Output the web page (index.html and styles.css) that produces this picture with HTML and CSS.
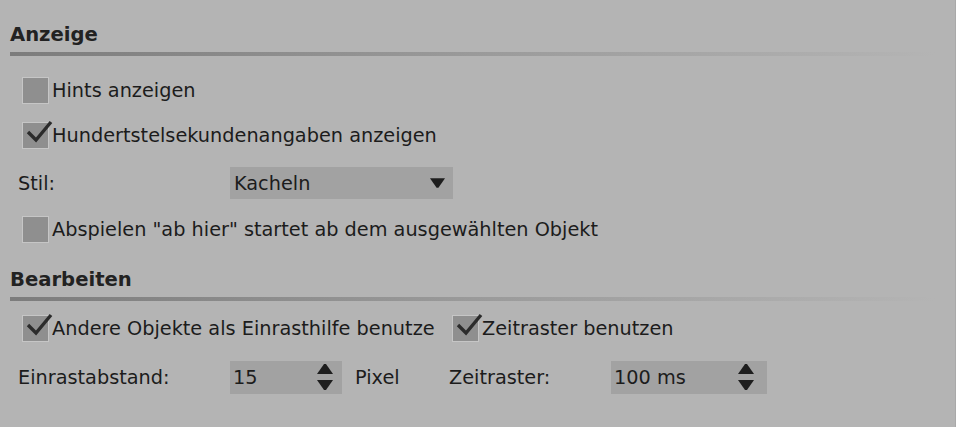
FILE: index.html
```html
<!DOCTYPE html>
<html lang="de">
<head>
<meta charset="utf-8">
<link rel="stylesheet" href="styles.css">
</head>
<body>
<div class="panel">
  <div class="title t1">Anzeige</div>
  <div class="sep"></div>

  <div class="row r-hints">
    <span class="cb"></span><span class="lbl">Hints anzeigen</span>
  </div>
  <div class="row r-hund">
    <span class="cb checked"><svg viewBox="0 0 28 28" class="tick"><polyline points="4,11 12,19 27,1"/></svg></span><span class="lbl">Hundertstelsekundenangaben anzeigen</span>
  </div>
  <div class="row r-stil">
    <span class="field-label">Stil:</span>
    <div class="select">
      <span class="val">Kacheln</span>
      <svg class="arrow" viewBox="0 0 16 10"><polygon points="0,0 16,0 9,10 7,10"/></svg>
    </div>
  </div>
  <div class="row r-abs">
    <span class="cb"></span><span class="lbl">Abspielen "ab hier" startet ab dem ausgewählten Objekt</span>
  </div>

  <div class="title t2">Bearbeiten</div>
  <div class="sep"></div>

  <div class="row r-andere">
    <span class="cb checked"><svg viewBox="0 0 28 28" class="tick"><polyline points="4,11 12,19 27,1"/></svg></span><span class="lbl clip">Andere Objekte als Einrasthilfe benutzen</span>
    <span class="cb checked cb2"><svg viewBox="0 0 28 28" class="tick"><polyline points="4,11 12,19 27,1"/></svg></span><span class="lbl">Zeitraster benutzen</span>
  </div>
  <div class="row r-einrast">
    <span class="field-label">Einrastabstand:</span>
    <div class="spin s1">
      <span class="val">15</span>
      <svg class="updown" viewBox="0 0 16 26"><polygon points="7,0 9,0 16,10 0,10"/><polygon points="0,16 16,16 9,26 7,26"/></svg>
    </div>
    <span class="unit">Pixel</span>
    <span class="field-label l2">Zeitraster:</span>
    <div class="spin s2">
      <span class="val">100 ms</span>
      <svg class="updown" viewBox="0 0 16 26"><polygon points="7,0 9,0 16,10 0,10"/><polygon points="0,16 16,16 9,26 7,26"/></svg>
    </div>
  </div>
</div>
</body>
</html>
```

FILE: styles.css
```css
html, body {
  margin: 0;
  padding: 0;
}
body {
  width: 956px;
  height: 427px;
  background: #b4b4b4;
  font-family: "DejaVu Sans", sans-serif;
  font-size: 19.3px;
  color: #1c1c1c;
  overflow: hidden;
  box-sizing: border-box;
  border-right: 1px solid #a9a9a9;
}
.panel {
  padding-left: 10px;
}
.title {
  height: 30px;
  line-height: 30px;
  font-weight: bold;
  font-size: 19.6px;
  color: #222;
}
.t1 {
  padding-top: 20px;
}
.t2 {
  margin-top: 14px;
}
.sep {
  margin-top: 2px;
  height: 4px;
  margin-right: 20px;
  background: linear-gradient(to right, #7c7c7c 0%, #9a9a9a 50%, #b4b4b4 100%);
}
.row {
  display: flex;
  align-items: center;
}
.r-hints { margin-top: 12px; height: 45px; }
.r-hund { height: 45px; }
.r-stil { height: 50px; }
.r-abs { height: 43px; }
.r-andere { margin-top: 5px; height: 44px; }
.r-einrast { height: 54px; }

.cb {
  position: relative;
  flex: none;
  width: 25px;
  height: 25px;
  margin-left: 12px;
  margin-right: 3px;
  background: #8f8f8f;
  border: 1px solid #c6c6c6;
}
.cb2 {
  margin-left: 17px;
}
.tick {
  position: absolute;
  left: 1px;
  top: -2px;
  width: 28px;
  height: 28px;
  overflow: visible;
}
.tick polyline {
  fill: none;
  stroke: #2b2b2b;
  stroke-width: 3.4;
}
.lbl {
  white-space: nowrap;
}
.clip {
  display: inline-block;
  width: 383px;
  overflow: hidden;
}
.field-label {
  margin-left: 8px;
  width: 212px;
  flex: none;
}
.select {
  width: 223px;
  height: 32px;
  background: #a2a2a2;
  display: flex;
  align-items: center;
  justify-content: space-between;
  box-sizing: border-box;
  padding: 0 8px 0 4px;
}
.arrow {
  width: 15px;
  height: 10px;
  fill: #1e1e1e;
}
.spin {
  height: 33px;
  background: #a2a2a2;
  display: flex;
  align-items: center;
  justify-content: space-between;
  box-sizing: border-box;
  padding: 0 9px 0 3px;
}
.s1 { width: 112px; }
.s2 { width: 156px; padding-right: 13px; }
.updown {
  width: 16px;
  height: 26px;
  fill: #1e1e1e;
}
.unit {
  margin-left: 13px;
  width: 94px;
}
.l2 {
  margin-left: 0;
  width: 162px;
}
```
